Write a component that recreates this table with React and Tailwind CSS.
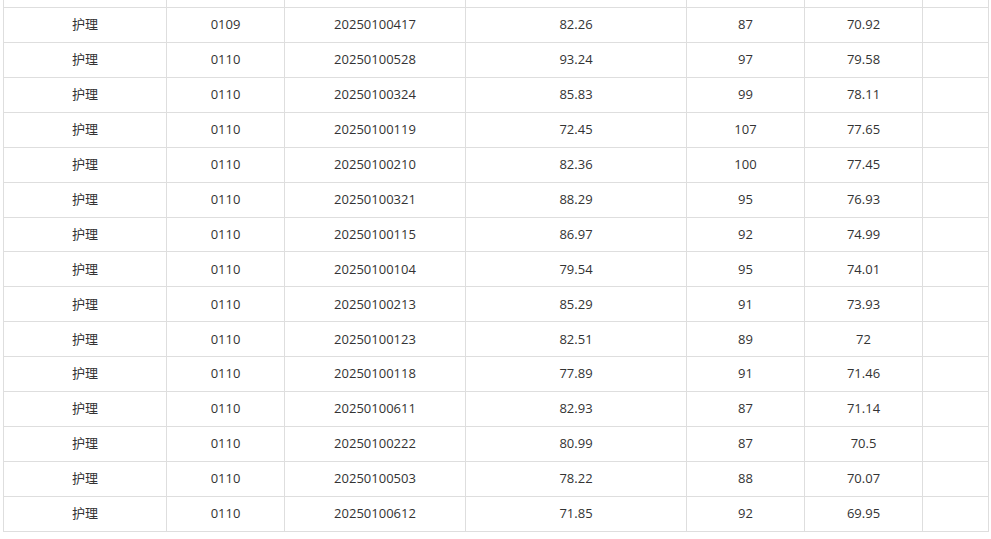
import React from "react";

const rows = [
  ["护理", "0109", "20250100417", "82.26", "87", "70.92"],
  ["护理", "0110", "20250100528", "93.24", "97", "79.58"],
  ["护理", "0110", "20250100324", "85.83", "99", "78.11"],
  ["护理", "0110", "20250100119", "72.45", "107", "77.65"],
  ["护理", "0110", "20250100210", "82.36", "100", "77.45"],
  ["护理", "0110", "20250100321", "88.29", "95", "76.93"],
  ["护理", "0110", "20250100115", "86.97", "92", "74.99"],
  ["护理", "0110", "20250100104", "79.54", "95", "74.01"],
  ["护理", "0110", "20250100213", "85.29", "91", "73.93"],
  ["护理", "0110", "20250100123", "82.51", "89", "72"],
  ["护理", "0110", "20250100118", "77.89", "91", "71.46"],
  ["护理", "0110", "20250100611", "82.93", "87", "71.14"],
  ["护理", "0110", "20250100222", "80.99", "87", "70.5"],
  ["护理", "0110", "20250100503", "78.22", "88", "70.07"],
  ["护理", "0110", "20250100612", "71.85", "92", "69.95"],
];

const cols = "grid grid-cols-[163px_118px_181px_221px_118px_118px_67px]";

export default function App() {
  return (
    <div className="w-[991px] h-[539px] overflow-hidden bg-white pl-[3px] text-[13px] text-[#333] [font-family:'Open_Sans','Noto_Sans_CJK_SC',sans-serif]">
      <div className="w-[986px]">
        {/* tail of the row above, cut off by the scroll */}
        <div className={`${cols} h-[7px]`}>
          {[0, 1, 2, 3, 4, 5].map((i) => (
            <div key={i} className="border-l border-[#dedede]" />
          ))}
          <div className="border-l border-r border-[#dedede]" />
        </div>

        {rows.map((r, idx) => (
          <div
            key={idx}
            className={`${cols} border-t border-[#dedede] ${
              idx === rows.length - 1 ? "border-b h-[35.93px]" : "h-[34.93px]"
            }`}
          >
            {r.map((v, i) => (
              <div
                key={i}
                className="border-l border-[#dedede] flex items-center justify-center"
              >
                {v}
              </div>
            ))}
            <div className="border-l border-r border-[#dedede]" />
          </div>
        ))}
      </div>
    </div>
  );
}
